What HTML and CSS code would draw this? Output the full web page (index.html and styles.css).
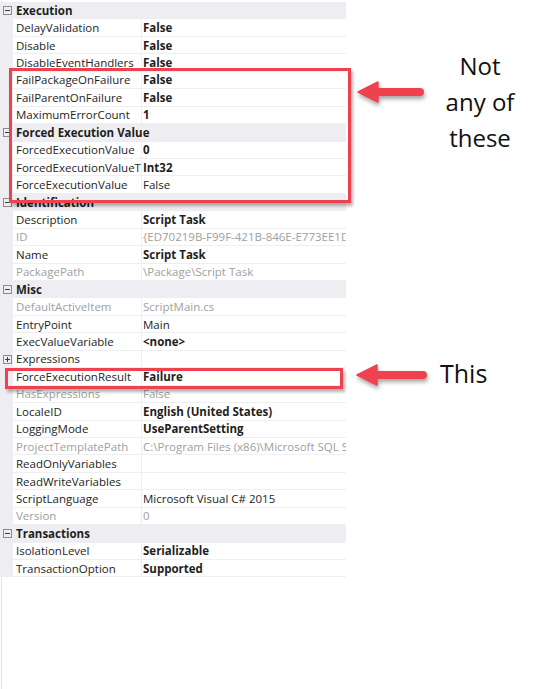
FILE: index.html
```html
<!DOCTYPE html>
<html lang="en">
<head>
    <meta charset="UTF-8">
    <title>Script Task Properties</title>
    <link rel="stylesheet" href="styles.css">
</head>
<body>
<div class="page">
    <div class="grid">
        <div class="cat"><span class="tog"><svg viewBox="0 0 9 9"><rect x="0.5" y="0.5" width="8" height="8"/><line x1="2" y1="4.5" x2="7" y2="4.5"/></svg></span><span>Execution</span></div>
        <div class="row"><span class="name">DelayValidation</span><span class="val b">False</span></div>
        <div class="row"><span class="name">Disable</span><span class="val b">False</span></div>
        <div class="row"><span class="name">DisableEventHandlers</span><span class="val b">False</span></div>
        <div class="row"><span class="name">FailPackageOnFailure</span><span class="val b">False</span></div>
        <div class="row"><span class="name">FailParentOnFailure</span><span class="val b">False</span></div>
        <div class="row"><span class="name">MaximumErrorCount</span><span class="val b">1</span></div>
        <div class="cat"><span class="tog"><svg viewBox="0 0 9 9"><rect x="0.5" y="0.5" width="8" height="8"/><line x1="2" y1="4.5" x2="7" y2="4.5"/></svg></span><span>Forced Execution Value</span></div>
        <div class="row"><span class="name">ForcedExecutionValue</span><span class="val b">0</span></div>
        <div class="row"><span class="name">ForcedExecutionValueType</span><span class="val b">Int32</span></div>
        <div class="row"><span class="name">ForceExecutionValue</span><span class="val">False</span></div>
        <div class="cat"><span class="tog"><svg viewBox="0 0 9 9"><rect x="0.5" y="0.5" width="8" height="8"/><line x1="2" y1="4.5" x2="7" y2="4.5"/></svg></span><span>Identification</span></div>
        <div class="row"><span class="name">Description</span><span class="val b">Script Task</span></div>
        <div class="row off"><span class="name">ID</span><span class="val">{ED70219B-F99F-421B-846E-E773EE1DB2C4}</span></div>
        <div class="row"><span class="name">Name</span><span class="val b">Script Task</span></div>
        <div class="row off"><span class="name">PackagePath</span><span class="val">\Package\Script Task</span></div>
        <div class="cat"><span class="tog"><svg viewBox="0 0 9 9"><rect x="0.5" y="0.5" width="8" height="8"/><line x1="2" y1="4.5" x2="7" y2="4.5"/></svg></span><span>Misc</span></div>
        <div class="row off"><span class="name">DefaultActiveItem</span><span class="val">ScriptMain.cs</span></div>
        <div class="row"><span class="name">EntryPoint</span><span class="val">Main</span></div>
        <div class="row"><span class="name">ExecValueVariable</span><span class="val b">&lt;none&gt;</span></div>
        <div class="row"><span class="tog"><svg viewBox="0 0 9 9"><rect x="0.5" y="0.5" width="8" height="8"/><line x1="2" y1="4.5" x2="7" y2="4.5"/><line x1="4.5" y1="2" x2="4.5" y2="7"/></svg></span><span class="name">Expressions</span><span class="val"></span></div>
        <div class="row"><span class="name">ForceExecutionResult</span><span class="val b">Failure</span></div>
        <div class="row off"><span class="name">HasExpressions</span><span class="val">False</span></div>
        <div class="row"><span class="name">LocaleID</span><span class="val b">English (United States)</span></div>
        <div class="row"><span class="name">LoggingMode</span><span class="val b">UseParentSetting</span></div>
        <div class="row off"><span class="name">ProjectTemplatePath</span><span class="val">C:\Program Files (x86)\Microsoft SQL Server\130\DTS</span></div>
        <div class="row"><span class="name">ReadOnlyVariables</span><span class="val"></span></div>
        <div class="row"><span class="name">ReadWriteVariables</span><span class="val"></span></div>
        <div class="row"><span class="name">ScriptLanguage</span><span class="val">Microsoft Visual C# 2015</span></div>
        <div class="row off"><span class="name">Version</span><span class="val">0</span></div>
        <div class="cat"><span class="tog"><svg viewBox="0 0 9 9"><rect x="0.5" y="0.5" width="8" height="8"/><line x1="2" y1="4.5" x2="7" y2="4.5"/></svg></span><span>Transactions</span></div>
        <div class="row"><span class="name">IsolationLevel</span><span class="val b">Serializable</span></div>
        <div class="row"><span class="name">TransactionOption</span><span class="val b">Supported</span></div>
    </div>

    <!-- callouts drawn over the grid -->
    <div class="mark mark-group"></div>
    <div class="mark mark-single"></div>

    <svg class="arrow arrow-group" viewBox="0 0 72 26">
        <line x1="22" y1="11" x2="64" y2="11"/>
        <polygon points="2,11 22,1 22,21"/>
    </svg>
    <svg class="arrow arrow-single" viewBox="0 0 76 26">
        <line x1="22" y1="11" x2="68" y2="11"/>
        <polygon points="2,11 22,1 22,21"/>
    </svg>

    <div class="note note-group">Not<br>any of<br>these</div>
    <div class="note note-single">This</div>
</div>
</body>
</html>
```

FILE: styles.css
```css
body { margin: 0; background: #fff; font-family: "Open Sans", "Noto Sans", sans-serif; }
.page { position: relative; width: 542px; height: 689px; overflow: hidden; }
.page::before { content: ""; position: absolute; left: 1px; top: 0; bottom: 0; width: 1px; background: #e3e3e3; }

.grid { width: 346px; padding-top: 2px; font-size: 11.5px; color: #1e1e1e; }
.row, .cat { position: relative; display: grid; grid-template-columns: 13px 129px 1fr; height: 17.44px; box-sizing: border-box; align-items: center; white-space: nowrap; }
.row { background: #eeeef2; }
.row .name, .row .val { height: 100%; display: flex; align-items: center; background: #fff; border-bottom: 1px solid #efeff1; box-sizing: border-box; overflow: hidden; }
.row .name { grid-column: 2; padding-left: 3px; border-right: 1px solid #efeff1; }
.row .val { grid-column: 3; padding-left: 1px; }
.row .b { font-weight: 700; }
.off { color: #a0a0a0; }
.cat { background: #eeeef2; font-weight: 700; }
.cat > span:last-child { grid-column: 2 / 4; padding-left: 3px; }

.tog { grid-column: 1; display: flex; align-items: center; justify-content: center; padding-left: 2px; }
.tog svg { width: 9px; height: 9px; display: block; }
.tog rect { fill: none; stroke: #8c8c8c; stroke-width: 1; }
.tog line { stroke: #3c3c3c; stroke-width: 1; }

.mark { position: absolute; border: 3px solid #f0414f; box-shadow: 2px 3px 3px rgba(0, 0, 0, 0.3); }
.mark-group { left: 9px; top: 68px; width: 336px; height: 129px; }
.mark-single { left: 5px; top: 368px; width: 332px; height: 15px; }

.arrow { position: absolute; overflow: visible; filter: drop-shadow(1px 3px 2px rgba(0, 0, 0, 0.35)); }
.arrow line { stroke: #f0414f; stroke-width: 8; stroke-linecap: round; }
.arrow polygon { fill: #f0414f; stroke: #f0414f; stroke-width: 1.5; stroke-linejoin: round; }
.arrow-group { left: 356px; top: 81px; width: 72px; height: 26px; }
.arrow-single { left: 355px; top: 364px; width: 76px; height: 26px; }

.note { position: absolute; color: #111; text-align: center; font-weight: 400; }
.note-group { left: 430px; top: 48px; width: 100px; font-size: 24px; line-height: 36px; }
.note-single { left: 440px; top: 361px; font-size: 25px; line-height: 25px; }
```
